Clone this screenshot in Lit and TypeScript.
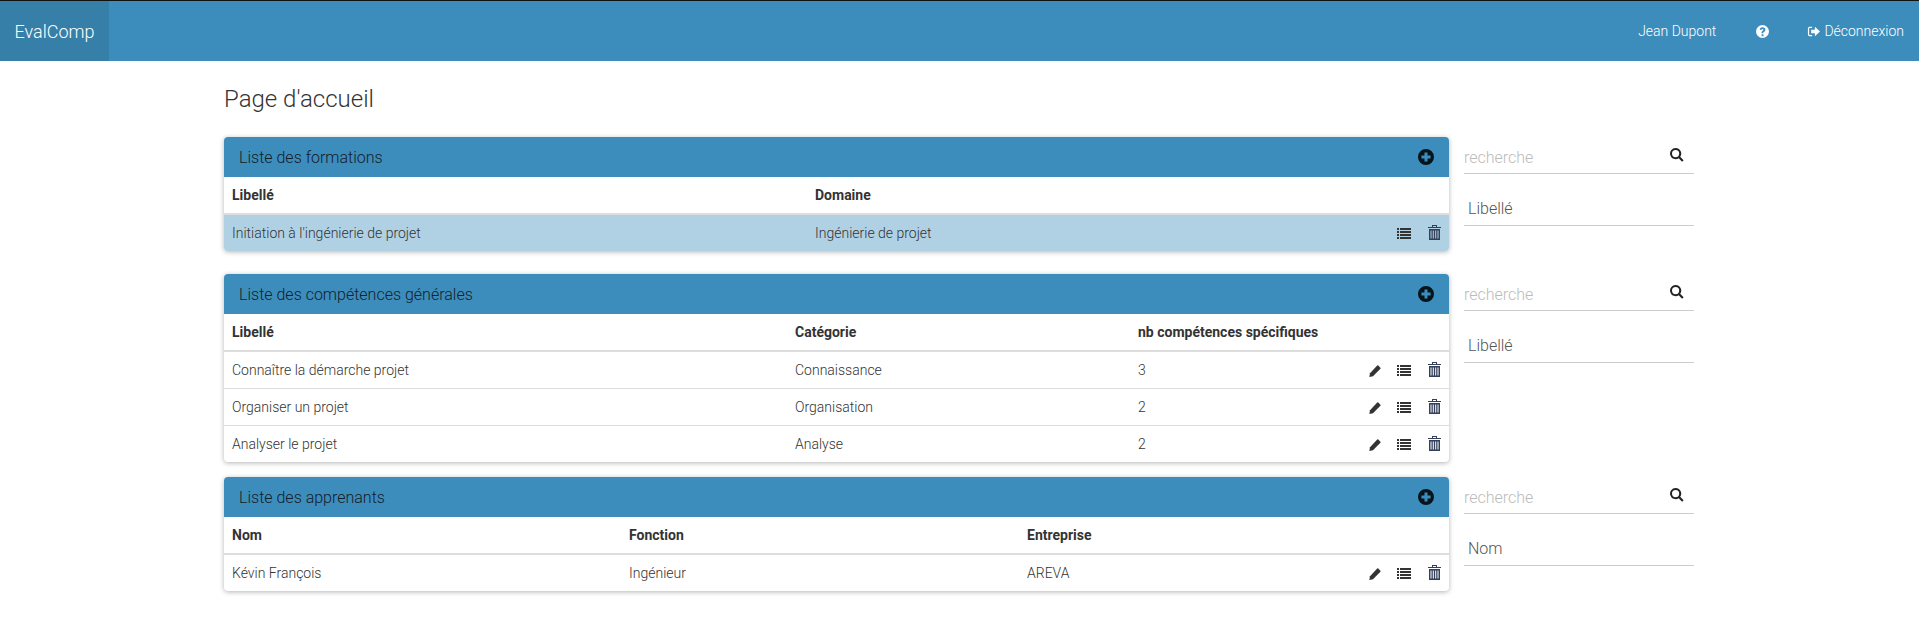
import { LitElement, html, css, svg } from "lit";
import { customElement } from "lit/decorators.js";

const plus = svg`<path fill-rule="evenodd" d="M7 0a7 7 0 1 1 0 14A7 7 0 0 1 7 0zM5.700 3v2.700H3v2.600h2.700V11h2.600V8.300H11V5.700H8.300V3z"/>`;
const search = svg`<path fill-rule="evenodd" d="M5.600 0a5.600 5.600 0 0 1 4.600 8.800l3.400 3.400-1.500 1.500-3.400-3.400A5.600 5.600 0 1 1 5.600 0zm0 2a3.600 3.600 0 1 0 0 7.200 3.600 3.600 0 0 0 0-7.200z"/>`;
const list = svg`<path d="M0 0h2v2H0zM3 0h11v2H3zM0 3h2v2H0zM3 3h11v2H3zM0 6h2v2H0zM3 6h11v2H3zM0 9h2v2H0zM3 9h11v2H3z"/>`;
const trash = svg`<path fill-rule="evenodd" d="M4 0h5v2h4v1H0V2h4zm1 1v1h3V1zM1 4h11v11H1zm1.500 1.500v8h1v-8zm2.300 0v8h1v-8zm2.400 0v8h1v-8zm2.300 0v8h1v-8z"/>`;
const pencil = svg`<path d="M9.300.6l2.100 2.100a.8.8 0 0 1 0 1.100L4 11.200.3 12 1 8.300 8.200.6a.8.8 0 0 1 1.100 0z"/>`;
const help = svg`<path fill-rule="evenodd" d="M7 0a7 7 0 1 1 0 14A7 7 0 0 1 7 0zM6 10v2h2v-2zM7.100 2.500C5.400 2.500 4.300 3.400 4.100 5l1.800.3c.1-.8.500-1.100 1.100-1.100.6 0 1 .3 1 .8 0 .5-.3.8-.9 1.300-.8.600-1.100 1.200-1.100 2.300V9h1.900v-.2c0-.6.200-.9.900-1.400.9-.7 1.300-1.300 1.300-2.400 0-1.500-1.200-2.500-3-2.500z"/>`;
const logout = svg`<path d="M5.500 2H2.800A1.800 1.800 0 0 0 1 3.800v6.400A1.800 1.800 0 0 0 2.800 12h2.700v-1.300H3a.7.7 0 0 1-.7-.7V4a.7.7 0 0 1 .7-.7h2.500z"/><path d="M8.500 2 14 7l-5.500 5V9H4.500V5h4z"/>`;

const icon = (p: unknown, cls: string, vb = "0 0 14 14") => html`<svg class=${cls} viewBox=${vb} aria-hidden="true">${p}</svg>`;

interface Panel {
  title: string;
  filter: string;
  cols: { label: string; width: number }[];
  rows: string[][];
  edit: boolean;
  selected?: boolean;
}

const panels: Panel[] = [
  {
    title: "Liste des formations",
    filter: "Libellé",
    cols: [{ label: "Libellé", width: 583 }, { label: "Domaine", width: 642 }],
    rows: [["Initiation à l'ingénierie de projet", "Ingénierie de projet"]],
    edit: false,
    selected: true,
  },
  {
    title: "Liste des compétences générales",
    filter: "Libellé",
    cols: [{ label: "Libellé", width: 563 }, { label: "Catégorie", width: 343 }, { label: "nb compétences spécifiques", width: 319 }],
    rows: [
      ["Connaître la démarche projet", "Connaissance", "3"],
      ["Organiser un projet", "Organisation", "2"],
      ["Analyser le projet", "Analyse", "2"],
    ],
    edit: true,
  },
  {
    title: "Liste des apprenants",
    filter: "Nom",
    cols: [{ label: "Nom", width: 397 }, { label: "Fonction", width: 398 }, { label: "Entreprise", width: 430 }],
    rows: [["Kévin François", "Ingénieur", "AREVA"]],
    edit: true,
  },
];

@customElement("app-root")
export class AppRoot extends LitElement {
  static styles = css`
    :host { display: block; font-family: Roboto, "Liberation Sans", sans-serif; font-weight: 300; color: #333; background: #fff; min-height: 636px; }
    * { box-sizing: border-box; }
    .nav { height: 61px; background: #3c8dbc; border-top: 1px solid #111; display: flex; align-items: stretch; color: #fff; }
    .brand { width: 109px; background: #367fa9; font-size: 18px; display: flex; align-items: center; justify-content: center; }
    .nav-right { margin-left: auto; display: flex; align-items: center; font-size: 14px; font-weight: 300; padding-right: 15px; }
    .nav-right span { display: inline-flex; align-items: center; }
    .user { margin-right: 40px; }
    .help { margin-right: 38px; }
    .ni { width: 13px; height: 13px; fill: #fff; }
    .logout .ni { margin-right: 4px; }
    main { padding: 0 0 0 224px; }
    h1 { margin: 0; font-size: 24px; font-weight: 300; line-height: 30px; padding: 23px 0 0; height: 76px; }
    .section { display: flex; margin-bottom: 15px; }
    .section:last-child { margin-bottom: 0; }
    .panel { width: 1225px; flex: none; border-radius: 4px; overflow: hidden; box-shadow: 0 1px 5px rgba(0,0,0,.3); background: #fff; align-self: flex-start; }
    .phead { height: 40px; background: #3c8dbc; display: flex; align-items: center; justify-content: space-between; padding: 0 15px; font-size: 16px; color: #152029; }
    .phead svg { width: 16px; height: 16px; fill: #06141c; }
    table { border-collapse: separate; border-spacing: 0; width: 100%; table-layout: fixed; font-size: 14px; }
    th { text-align: left; font-weight: 700; height: 38px; padding: 0 8px; border-bottom: 2px solid #ddd; }
    td { height: 37px; padding: 0 8px; border-top: 1px solid #ddd; position: relative; }
    tr:first-child td { border-top: 0; height: 36px; }
    tr.sel td { background: #b0d1e4; }
    .acts { position: absolute; right: 7px; top: 0; bottom: 0; display: flex; align-items: center; gap: 16px; }
    .acts svg { width: 14px; display: block; fill: #333; }
    .acts .l { height: 11px; margin-right: 1px; }
    .acts .p { height: 12px; width: 12px; margin: 2px 0 0 1px; }
    .acts .t { height: 15px; width: 13px; margin: -1px 1px 0 0; fill: #34405a; }
    .side { width: 230px; min-height: 122px; margin-left: 15px; flex: none; }
    .search { height: 37px; border-bottom: 1px solid #ccc; display: flex; justify-content: space-between; color: #bbb; font-size: 16px; padding-top: 11px; }
    .search svg { width: 14px; height: 14px; fill: #222; margin: 0 10px 0 0; }
    .filter { margin-top: 15px; height: 37px; border-bottom: 1px solid #ccc; font-size: 16px; padding: 10px 0 0 4px; color: #555; }
  `;

  render() {
    return html`
      <div class="nav">
        <div class="brand">EvalComp</div>
        <div class="nav-right">
          <span class="user">Jean Dupont</span>
          <span class="help">${icon(help, "ni")}</span>
          <span class="logout">${icon(logout, "ni")}Déconnexion</span>
        </div>
      </div>
      <main>
        <h1>Page d'accueil</h1>
        ${panels.map((p) => html`
          <div class="section">
            <div class="panel">
              <div class="phead"><span>${p.title}</span>${icon(plus, "")}</div>
              <table>
                <colgroup>${p.cols.map((c) => html`<col style="width:${c.width}px" />`)}</colgroup>
                <thead><tr>${p.cols.map((c) => html`<th>${c.label}</th>`)}</tr></thead>
                <tbody>
                  ${p.rows.map((r) => html`
                    <tr class=${p.selected ? "sel" : ""}>
                      ${r.map((v, i) => html`<td>${v}${i === r.length - 1 ? html`
                        <div class="acts">
                          ${p.edit ? icon(pencil, "p", "0 0 12 12") : ""}
                          ${icon(list, "l", "0 0 14 11")}
                          ${icon(trash, "t", "0 0 13 15")}
                        </div>` : ""}</td>`)}
                    </tr>`)}
                </tbody>
              </table>
            </div>
            <div class="side">
              <div class="search"><span>recherche</span>${icon(search, "")}</div>
              <div class="filter">${p.filter}</div>
            </div>
          </div>`)}
      </main>
    `;
  }
}
